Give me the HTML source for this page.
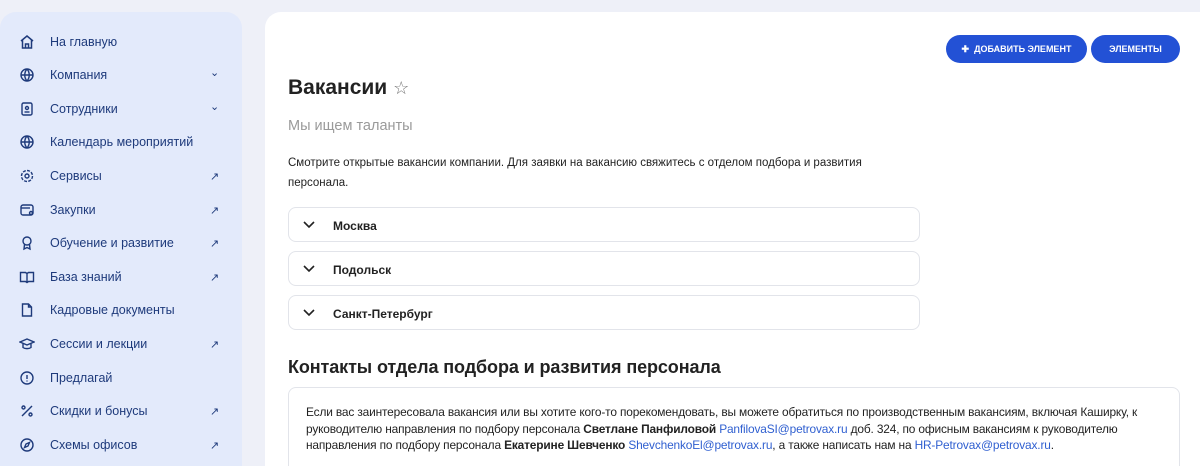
<!DOCTYPE html>
<html style="margin:0;width:1200px;height:466px;overflow:hidden"><head><meta charset="utf-8"><style>
body{margin:0;width:1200px;height:466px;overflow:hidden;background:#eef0f8;font-family:"Liberation Sans",sans-serif;position:relative}
.side{position:absolute;left:0;top:12px;width:242px;height:454px;background:#e3eafb;border-radius:16px 16px 0 0}
.nav{position:absolute;left:0;width:242px;height:20px;font-size:12.5px;color:#1e3a7b}
.nav svg{position:absolute;left:19px;top:1px}
.nav span{position:absolute;left:50px;top:2px}
.nav i{position:absolute;left:210px;top:3px;font-style:normal;font-size:11px}
.nav i.d{top:0}
.main{position:absolute;left:265px;top:12px;width:935px;height:454px;background:#fff;border-radius:16px 0 0 0}
.btn{position:absolute;top:35px;height:28px;background:#2351d5;border-radius:14px;color:#fff;font-size:9px;font-weight:bold;line-height:28px;text-align:center}
.acc{position:absolute;left:288px;width:632px;height:35px;border:1px solid #e2e4ea;border-radius:8px;box-sizing:border-box;font-size:12px;font-weight:bold;color:#222}
.acc span{position:absolute;left:44px;top:11px}
.acc svg{position:absolute;left:14px;top:12px}
a{color:#2f5fd0;text-decoration:none}
</style></head><body>
<div class="side"></div>
<div class="nav" style="top:33px"><svg width="16" height="16" viewBox="0 0 16 16" fill="none" stroke="#1e3a7b" stroke-width="1.5"><path d="M2 7L8 2l6 5M3.5 6v8h9V6M6.5 14v-4h3v4"/></svg><span>На главную</span></div>
<div class="nav" style="top:66px"><svg width="16" height="16" viewBox="0 0 16 16" fill="none" stroke="#1e3a7b" stroke-width="1.4"><circle cx="8" cy="8" r="6"/><path d="M2 8h12M8 2c-3 3.5-3 8.5 0 12M8 2c3 3.5 3 8.5 0 12"/></svg><span>Компания</span><i class="d">⌄</i></div>
<div class="nav" style="top:100px"><svg width="16" height="16" viewBox="0 0 16 16" fill="none" stroke="#1e3a7b" stroke-width="1.4"><rect x="3" y="2" width="10" height="12" rx="1.5"/><circle cx="8" cy="7" r="1.5"/><path d="M5.5 11h5"/></svg><span>Сотрудники</span><i class="d">⌄</i></div>
<div class="nav" style="top:133px"><svg width="16" height="16" viewBox="0 0 16 16" fill="none" stroke="#1e3a7b" stroke-width="1.4"><circle cx="8" cy="8" r="6"/><path d="M2 8h12M8 2c-3 3.5-3 8.5 0 12M8 2c3 3.5 3 8.5 0 12"/></svg><span>Календарь мероприятий</span></div>
<div class="nav" style="top:167px"><svg width="16" height="16" viewBox="0 0 16 16" fill="none" stroke="#1e3a7b" stroke-width="1.4"><circle cx="8" cy="8" r="2"/><circle cx="8" cy="8" r="5.5" stroke-dasharray="3 1.3"/></svg><span>Сервисы</span><i>↗</i></div>
<div class="nav" style="top:201px"><svg width="16" height="16" viewBox="0 0 16 16" fill="none" stroke="#1e3a7b" stroke-width="1.4"><rect x="2" y="3" width="12" height="10" rx="2"/><path d="M2 6h9"/><circle cx="12" cy="11" r="1.5"/></svg><span>Закупки</span><i>↗</i></div>
<div class="nav" style="top:234px"><svg width="16" height="16" viewBox="0 0 16 16" fill="none" stroke="#1e3a7b" stroke-width="1.4"><circle cx="8" cy="6" r="4"/><path d="M5.5 9.5L5 14l3-1.5 3 1.5-.5-4.5"/></svg><span>Обучение и развитие</span><i>↗</i></div>
<div class="nav" style="top:268px"><svg width="16" height="16" viewBox="0 0 16 16" fill="none" stroke="#1e3a7b" stroke-width="1.4"><path d="M1.5 3.5h5l1.5 1 1.5-1h5v9h-5L8 13.5 6.5 12.5h-5zM8 4.5v9"/></svg><span>База знаний</span><i>↗</i></div>
<div class="nav" style="top:301px"><svg width="16" height="16" viewBox="0 0 16 16" fill="none" stroke="#1e3a7b" stroke-width="1.4"><path d="M3.5 2h6l3 3v9h-9zM9.5 2v3h3"/></svg><span>Кадровые документы</span></div>
<div class="nav" style="top:335px"><svg width="16" height="16" viewBox="0 0 16 16" fill="none" stroke="#1e3a7b" stroke-width="1.4"><path d="M1 6l7-3 7 3-7 3zM4 7.5v4c2 1.5 6 1.5 8 0v-4"/></svg><span>Сессии и лекции</span><i>↗</i></div>
<div class="nav" style="top:369px"><svg width="16" height="16" viewBox="0 0 16 16" fill="none" stroke="#1e3a7b" stroke-width="1.4"><circle cx="8" cy="8" r="6"/><path d="M8 5v4M8 10.5v1"/></svg><span>Предлагай</span></div>
<div class="nav" style="top:402px"><svg width="16" height="16" viewBox="0 0 16 16" fill="none" stroke="#1e3a7b" stroke-width="1.4"><path d="M3 13L13 3"/><circle cx="4.5" cy="4.5" r="1.5"/><circle cx="11.5" cy="11.5" r="1.5"/></svg><span>Скидки и бонусы</span><i>↗</i></div>
<div class="nav" style="top:436px"><svg width="16" height="16" viewBox="0 0 16 16" fill="none" stroke="#1e3a7b" stroke-width="1.4"><circle cx="8" cy="8" r="6"/><path d="M10.5 5.5l-1.5 3.5-3.5 1.5 1.5-3.5z"/></svg><span>Схемы офисов</span><i>↗</i></div>

<div class="main"></div>
<div class="btn" style="left:946px;width:141px">✚&nbsp; ДОБАВИТЬ ЭЛЕМЕНТ</div>
<div class="btn" style="left:1091px;width:89px">ЭЛЕМЕНТЫ</div>
<div style="position:absolute;left:288px;top:76px;font-size:21px;font-weight:bold;color:#222">Вакансии <span style="font-weight:normal;color:#777;font-size:18px">☆</span></div>
<div style="position:absolute;left:288px;top:118px;font-size:14.5px;color:#9a9a9a">Мы ищем таланты</div>
<div style="position:absolute;left:288px;top:153px;width:620px;font-size:11.5px;line-height:20px;color:#222">Смотрите открытые вакансии компании. Для заявки на вакансию свяжитесь с отделом подбора и развития персонала.</div>
<div class="acc" style="top:207px"><svg width="12" height="10" viewBox="0 0 12 10" fill="none" stroke="#222" stroke-width="1.6"><path d="M1 2l5 5 5-5"/></svg><span>Москва</span></div>
<div class="acc" style="top:251px"><svg width="12" height="10" viewBox="0 0 12 10" fill="none" stroke="#222" stroke-width="1.6"><path d="M1 2l5 5 5-5"/></svg><span>Подольск</span></div>
<div class="acc" style="top:295px"><svg width="12" height="10" viewBox="0 0 12 10" fill="none" stroke="#222" stroke-width="1.6"><path d="M1 2l5 5 5-5"/></svg><span>Санкт-Петербург</span></div>
<div style="position:absolute;left:288px;top:357px;font-size:18px;color:#222;font-weight:600;letter-spacing:-0.1px">Контакты отдела подбора и развития персонала</div>
<div style="position:absolute;left:288px;top:387px;width:892px;height:79px;border:1px solid #e2e4ea;border-bottom:none;border-radius:8px 8px 0 0;box-sizing:border-box"></div>
<div style="position:absolute;left:306px;top:404px;width:872px;font-size:11.9px;line-height:16.5px;color:#222;letter-spacing:-0.15px">Если вас заинтересовала вакансия или вы хотите кого-то порекомендовать, вы можете обратиться по производственным вакансиям, включая Каширку, к руководителю направления по подбору персонала <b>Светлане Панфиловой</b> <a>PanfilovaSI@petrovax.ru</a> доб. 324, по офисным вакансиям к руководителю направления по подбору персонала <b>Екатерине Шевченко</b> <a>ShevchenkoEl@petrovax.ru</a>, а также написать нам на <a>HR-Petrovax@petrovax.ru</a>.</div>
</body></html>
